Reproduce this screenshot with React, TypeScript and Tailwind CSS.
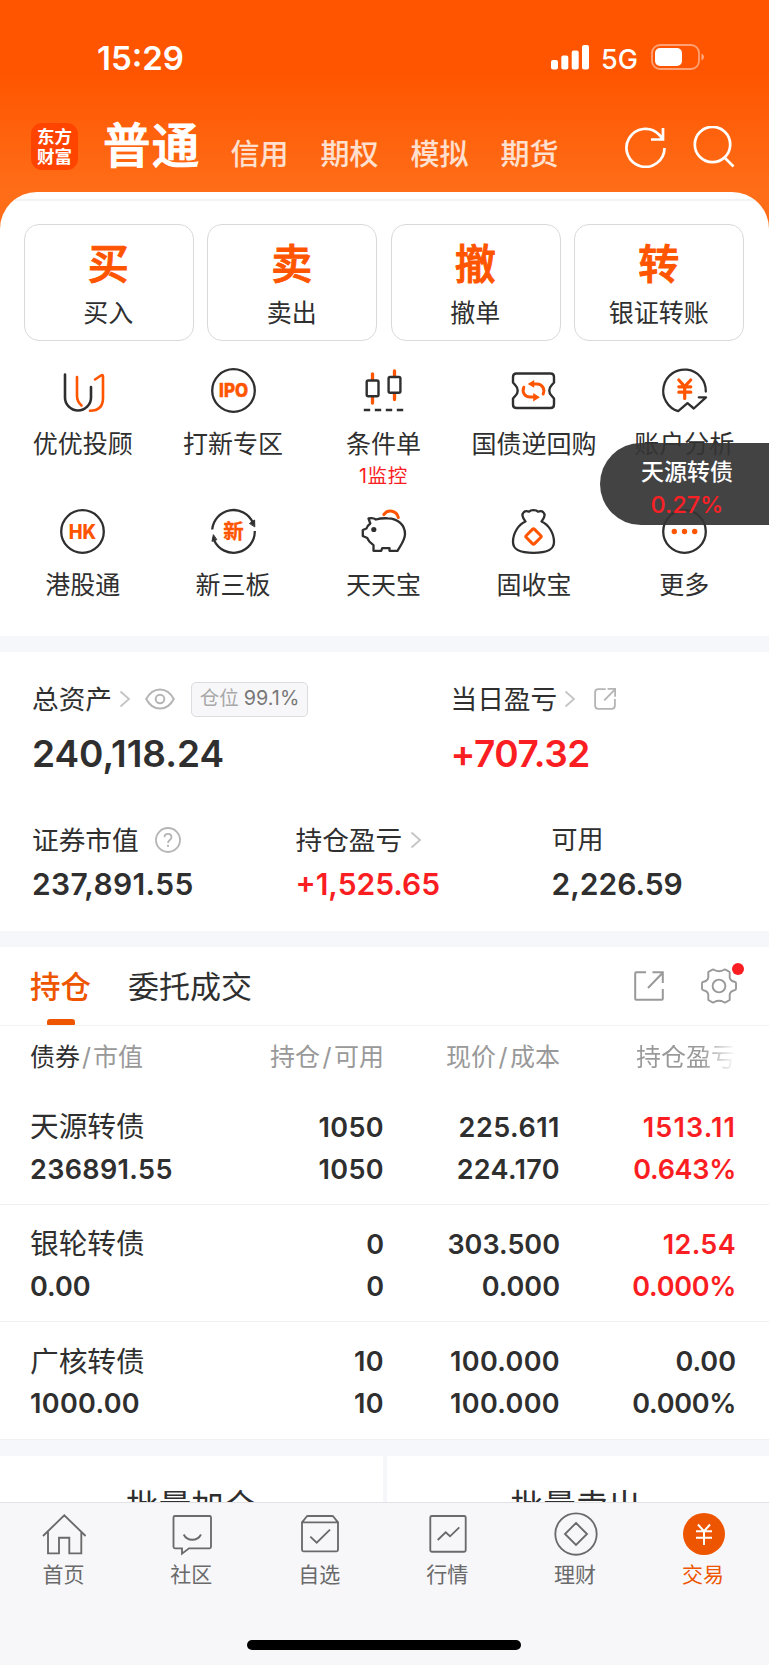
import React from "react";

const ORANGE = "#ff5500";
const DARK = "#2f2f2f";

function Glyph({ children }: { children: React.ReactNode }) {
  return (
    <svg viewBox="0 0 45 45" className="size-[45px] shrink-0 overflow-visible" fill="none" strokeLinecap="round" strokeLinejoin="round">
      {children}
    </svg>
  );
}

const Chevron = ({ className = "" }: { className?: string }) => (
  <svg viewBox="0 0 10 16" className={`h-4 w-2.5 shrink-0 overflow-visible ${className}`} fill="none" stroke="#c4c4c4" strokeWidth="1.8">
    <path d="M0.5 0.5 9 8 0.5 15.5" />
  </svg>
);

const actions = [
  { big: "买", label: "买入" },
  { big: "卖", label: "卖出" },
  { big: "撤", label: "撤单" },
  { big: "转", label: "银证转账" },
];

const shortcuts: { label: string; note?: string; icon: React.ReactNode }[] = [
  {
    label: "优优投顾",
    icon: (
      <g strokeWidth="2.6">
        <path stroke={ORANGE} d="M17 9v19c0 4 1.800 7 4.500 9.500M35 11.500l6-4q2-1.200 2 1.200V30c0 8-4 12.700-13 12.700" />
        <path stroke={DARK} d="M5 6.500v23a13 13 0 0 0 26 0V19" />
      </g>
    ),
  },
  {
    label: "打新专区",
    icon: (
      <>
        <circle cx="22.5" cy="22.5" r="21.3" stroke={DARK} strokeWidth="2.3" />
        <text x="22.6" y="29.3" textAnchor="middle" fontSize="18.500" fontWeight="800" fill={ORANGE} stroke={ORANGE} strokeWidth="0.5" textLength="29" lengthAdjust="spacingAndGlyphs">IPO</text>
      </>
    ),
  },
  {
    label: "条件单",
    note: "1监控",
    icon: (
      <>
        <path stroke={ORANGE} strokeWidth="3.3" d="M11.500 6v5.500M11.500 29.500v5.500M33.500 3v5.500M33.500 26v5.500" />
        <g stroke={DARK} strokeWidth="2.4">
          <rect x="5.700" y="12.500" width="11.800" height="15.800" rx="1.500" />
          <rect x="27.600" y="9" width="11.800" height="15.800" rx="1.500" />
          <path strokeLinecap="butt" d="M2.800 42h6.400M13.800 42h6.400M24.800 42h6.400M35.800 42h6.400" />
        </g>
      </>
    ),
  },
  {
    label: "国债逆回购",
    icon: (
      <>
        <path stroke={DARK} strokeWidth="2.4" d="M5.500 5.500h34q3.500 0 3.500 3.500v5.500l-2.600 3a7 7 0 0 0 0 10l2.600 3V36.500q0 3.500-3.500 3.500h-34q-3.500 0-3.500-3.500v-6l2.600-3a7 7 0 0 0 0-10l-2.600-3V9q0-3.500 3.500-3.500z" />
        <path stroke={ORANGE} strokeWidth="3" d="M12.800 19.200c-2 5 1 9.800 6.200 9.800h4M32.200 26c2-5-1-10-6.200-10h-4" />
        <path fill={ORANGE} d="M22.200 25l6.700 4.200-6.700 4.300zM23.200 12l-6.500 3.900 6.500 3.900z" />
      </>
    ),
  },
  {
    label: "账户分析",
    icon: (
      <>
        <path stroke={DARK} strokeWidth="2.300" d="M43.800 23.500A21.300 21.300 0 1 0 16.200 43.200L25.500 35.200 31.800 40.500 44 29.300H36.800" />
        <path stroke={ORANGE} strokeWidth="3.200" d="M16.800 12l5.900 6.500L28.700 12M22.700 18.500v12M16.800 18.800h12M16.800 24.200h12" />
      </>
    ),
  },
  {
    label: "港股通",
    icon: (
      <>
        <circle cx="22.500" cy="22.500" r="21.300" stroke={DARK} strokeWidth="2.300" />
        <text x="22.500" y="29.600" textAnchor="middle" fontSize="19.500" fontWeight="800" fill={ORANGE} textLength="27.500" lengthAdjust="spacingAndGlyphs">HK</text>
      </>
    ),
  },
  {
    label: "新三板",
    icon: (
      <>
        <path stroke={DARK} strokeWidth="2.300" strokeLinecap="butt" d="M1.200 20.500A21.300 21.300 0 0 1 41.800 13.500M43.800 22A21.300 21.300 0 0 1 3.200 31.500" />
        <path fill={DARK} stroke={DARK} strokeWidth="1" d="M38.800 14.300l4.800-3.300.2 6.500zM2.300 26l-1.300 6.300 4.500-1.500z" />
        <text x="22.500" y="29.800" textAnchor="middle" fontSize="20.500" fontWeight="700" fill={ORANGE} stroke={ORANGE} strokeWidth="0.300">新</text>
      </>
    ),
  },
  {
    label: "天天宝",
    icon: (
      <>
        <path stroke={ORANGE} strokeWidth="3" d="M22.800 5.600A8 8 0 0 1 37.300 8.500" />
        <path stroke={DARK} strokeWidth="2.300" d="M7.500 9.500c3-.6 5.500-.4 7.500 1 4-1.300 8-1.400 12-1.200C37 9.500 44 16 44 25c0 6-3.500 10-7.500 16.800h-8V39.100h-7.300l-1 2.700h-7.700v-5.700C9.500 34 7.500 32.500 6.300 29L1.800 27V21L5.500 19.500c.6-2 1.800-3.500 3.800-5z" />
        <circle cx="12.800" cy="20.500" r="2.600" fill={DARK} />
      </>
    ),
  },
  {
    label: "固收宝",
    icon: (
      <>
        <path stroke={DARK} strokeWidth="2.300" d="M14.500 12.500C11.500 9 10.500 5 12.600 3.300c1.600-1.500 3.700-1.200 5.400-.6 1.600-2 7.400-2 9 0 1.700-.6 3.800-.9 5.400.6C34.500 5 33.500 9 30.500 12.500 37.500 15.500 43 24 43 33c0 8.500-8 10.800-20.500 10.800S2 41.500 2 33c0-9 5.500-17.500 12.500-20.500z" />
        <rect x="16.700" y="21.700" width="11.600" height="11.600" rx="1.500" transform="rotate(45 22.500 27.500)" stroke={ORANGE} strokeWidth="3" />
      </>
    ),
  },
  {
    label: "更多",
    icon: (
      <>
        <circle cx="22.500" cy="22.500" r="21.300" stroke={DARK} strokeWidth="2.300" />
        <g fill={ORANGE}>
          <circle cx="12.300" cy="22.500" r="2.700" />
          <circle cx="22.500" cy="22.500" r="2.700" />
          <circle cx="32.700" cy="22.500" r="2.700" />
        </g>
      </>
    ),
  },
];

const holdings = [
  { name: "天源转债", value: "236891.55", held: "1050", free: "1050", price: "225.611", cost: "224.170", gain: "1513.11", rate: "0.643%", up: true },
  { name: "银轮转债", value: "0.00", held: "0", free: "0", price: "303.500", cost: "0.000", gain: "12.54", rate: "0.000%", up: true },
  { name: "广核转债", value: "1000.00", held: "10", free: "10", price: "100.000", cost: "100.000", gain: "0.00", rate: "0.000%", up: false },
];

const tabs: { label: string; icon: React.ReactNode; active?: boolean }[] = [
  { label: "首页", icon: <path d="M1 24 22.300 3.300 43.600 24M6 20v21.300h11V25.700h10.300v15.600h12V20" /> },
  { label: "社区", icon: <path d="M5 4h34.500q1.500 0 1.500 1.500V34.800q0 1.500-1.500 1.500H19l-7 5.400v-5.400H5q-1.500 0-1.500-1.500V5.500Q3.500 4 5 4zM13.700 22.500c3.500 7 13.700 7 17.300 0" /> },
  { label: "自选", icon: <path d="M4 10.300h36v27.500q0 1.500-1.500 1.500h-33Q4 39.300 4 37.800zL8.500 4.800Q9 4 10 4h24q1 0 1.500.8L40 10.300M12.300 24.700l6.400 6L32 17.700" /> },
  { label: "行情", icon: <path d="M5.800 4h32.400q1.500 0 1.500 1.500v32.700q0 1.500-1.500 1.500H5.800q-1.500 0-1.500-1.500V5.500Q4.300 4 5.800 4zM11.700 28l8-7.700 4.300 4 9.300-9" /> },
  {
    label: "理财",
    icon: (
      <>
        <circle cx="22" cy="22" r="20.700" />
        <path d="M22 11 33 22 22 33 11 22z" />
      </>
    ),
  },
  {
    label: "交易",
    active: true,
    icon: (
      <>
        <circle cx="22" cy="22" r="21" fill="#ee5500" stroke="none" />
        <path stroke="#fff" strokeWidth="2" d="M16 12.500l6 6.700 6-6.700M22 19.200V33M14 19.200h16M14 25.700h16" />
      </>
    ),
  },
];

function StatusBar() {
  return (
    <div className="flex h-[114px] items-center pr-[65px] pl-[97px] text-white">
      <span className="mt-[2px] text-[33px] font-semibold">15:29</span>
      <svg viewBox="0 0 38 25" className="ml-auto h-[25px] w-[38px]" fill="#fff">
        <rect x="0" y="15" width="7" height="9.500" rx="2" />
        <rect x="10.300" y="10.500" width="7" height="14" rx="2" />
        <rect x="20.700" y="5.500" width="7" height="19" rx="2" />
        <rect x="31" y="0" width="7" height="24.500" rx="2" />
      </svg>
      <span className="mt-[4px] ml-[12px] w-[37px] text-[27px] font-medium">5G</span>
      <svg viewBox="0 0 53 26" className="ml-[13px] h-[26px] w-[53px]">
        <rect x="1" y="1" width="47" height="24" rx="8" fill="none" stroke="#fff" strokeOpacity="0.45" strokeWidth="1.800" />
        <rect x="4" y="4" width="27" height="18" rx="5" fill="#fff" />
        <path d="M50.500 9.500q2.500 1 2.500 3.500t-2.500 3.500z" fill="#fff" fillOpacity="0.5" />
      </svg>
    </div>
  );
}

function AccountBar() {
  return (
    <div className="flex h-[78px] items-start pr-[34px] pl-[31px] text-white">
      <div className="mt-[9px] flex size-[47px] flex-col items-center justify-center gap-[2px] rounded-[11px] bg-[#ff4400] text-[17.500px] font-bold">
        <span>东方</span>
        <span>财富</span>
      </div>
      <span className="mt-[8px] ml-[25px] text-[47.500px] font-medium tracking-[1.200px] [-webkit-text-stroke:1px_currentColor]">普通</span>
      <div className="mt-[26px] ml-[30px] flex gap-[32px] text-[29px] font-medium text-white/80">
        <span>信用</span>
        <span>期权</span>
        <span>模拟</span>
        <span>期货</span>
      </div>
      <svg viewBox="0 0 42 42" className="mt-[12px] ml-auto size-[42px]" fill="none" stroke="#fff" strokeWidth="2.700">
        <path d="M39.500 22A19 19 0 1 1 34 8.500L38 13M38 2v11.500H26" />
      </svg>
      <svg viewBox="0 0 42 42" className="mt-[12px] ml-[26px] size-[42px]" fill="none" stroke="#fff" strokeWidth="2.700">
        <circle cx="19.500" cy="18.500" r="17.700" />
        <path d="M31.500 31.500 40.500 40.500" />
      </svg>
    </div>
  );
}

function ShareIcon({ className, color, round }: { className: string; color: string; round?: boolean }) {
  return (
    <svg viewBox="0 0 30 30" className={`${className} shrink-0`} fill="none" stroke={color} strokeWidth={round ? 2.500 : 2}>
      <path d={round ? "M16 1.500H6Q1.500 1.500 1.500 6v18q0 4.500 4.500 4.500h18q4.500 0 4.500-4.500v-9" : "M12 1.200H2.200q-1 0-1 1v25.600q0 1 1 1h25.600q1 0 1-1V18"} />
      <path d="M14 17 28 2.500M18.500 1.300h10.300V12" />
    </svg>
  );
}

function Assets() {
  return (
    <section className="h-[279px] pl-[32px] text-[#2f2f2f]">
      <div className="flex pt-[29px]">
        <div className="w-[418.500px]">
          <div className="flex h-[36px] items-center text-[26.700px]">
            <span>总资产</span>
            <Chevron className="ml-[8px]" />
            <svg viewBox="0 0 30 22" className="ml-[15px] h-[22px] w-[30px]" fill="none" stroke="#b5b5b5" strokeWidth="2">
              <path d="M1.200 11C8-1.800 22-1.800 28.800 11 22 23.800 8 23.800 1.200 11z" />
              <circle cx="15" cy="11" r="4.300" />
            </svg>
            <span className="ml-[16px] flex h-[35px] w-[117px] items-center justify-center gap-[5px] rounded-[5px] border border-[#dcdce0] bg-[#f7f7fa] text-[19.500px] text-[#a8a8a8]">
              仓位<span className="text-[19.800px] text-[#777]">99.1%</span>
            </span>
          </div>
          <p className="mt-[18px] text-[37px] font-semibold">240,118.24</p>
        </div>
        <div>
          <div className="flex h-[36px] items-center text-[26.700px]">
            <span>当日盈亏</span>
            <Chevron className="ml-[8px]" />
            <ShareIcon className="ml-[19px] size-[22px]" color="#b5b5b5" round />
          </div>
          <p className="mt-[18px] text-[37px] font-semibold tracking-[-0.450px] text-[#fa1e23]">+707.32</p>
        </div>
      </div>
      <div className="flex pt-[53px]">
        <div className="w-[263.500px]">
          <div className="flex h-[30px] items-center text-[26.700px]">
            <span>证券市值</span>
            <svg viewBox="0 0 26 26" className="ml-[16px] size-[26px]" fill="none" stroke="#b5b5b5" strokeWidth="1.800">
              <circle cx="13" cy="13" r="12" />
              <path d="M9.500 10.300c0-4.700 7-4.700 7 0 0 2.700-3.500 2.800-3.500 5.600M13 17.800v2.200" />
            </svg>
          </div>
          <p className="mt-[14px] text-[30px] font-semibold tracking-[0.350px]">237,891.55</p>
        </div>
        <div className="w-[256px]">
          <div className="flex h-[30px] items-center text-[26.700px]">
            <span>持仓盈亏</span>
            <Chevron className="ml-[9px]" />
          </div>
          <p className="mt-[14px] text-[30px] font-semibold text-[#fa1e23]">+1,525.65</p>
        </div>
        <div>
          <div className="flex h-[30px] items-center text-[26px]">可用</div>
          <p className="mt-[14px] text-[30px] font-semibold">2,226.59</p>
        </div>
      </div>
    </section>
  );
}

function tracking(text: string) {
  const ones = text.split("1").length - 1;
  if (text.endsWith("%")) return "tracking-[-0.300px]";
  if (ones >= 4) return "tracking-[1.100px]";
  if (ones === 2) return "tracking-[0.500px]";
  if (ones === 1) return "tracking-[0.350px]";
  return "";
}

function Figure({ text }: { text: string }) {
  return <span className={`flex h-[42px] items-center text-[27px] font-semibold ${tracking(text)}`}>{text}</span>;
}

function Pair({ top, bottom, className = "" }: { top: string; bottom: string; className?: string }) {
  return (
    <div className={`flex flex-col items-end ${className}`}>
      <Figure text={top} />
      <Figure text={bottom} />
    </div>
  );
}

function Holdings() {
  return (
    <section className="text-[#2f2f2f]">
      <div className="flex h-[79px] items-center border-b-[1.500px] border-[#f3f3f5] pr-[32px] pl-[30px] text-[31px]">
        <div className="flex h-full flex-col items-center text-[#ee5500]">
          <span className="mt-[25px] text-[30.500px] font-medium">持仓</span>
          <span className="mt-auto h-[6px] w-[28px] rounded-t-[3px] rounded-b-[1px] bg-[#ee5500]" />
        </div>
        <span className="ml-[37px]">委托成交</span>
        <ShareIcon className="ml-auto size-[30px]" color="#999" />
        <div className="relative ml-[37px] size-[36px]">
          <svg viewBox="0 0 36 36" className="size-[36px]" fill="none" stroke="#999" strokeWidth="1.900" strokeLinejoin="round">
            <path d="M7.300 4l4.200-2.300q1-.4 1.800.3 4.700 2.500 9.400 0 .8-.7 1.800-.3L28.700 4v5.500q.6 3.500 4.800 4.300 1.500.3 1.500 1.500v5.400q0 1.200-1.500 1.500-4.200.8-4.800 4.300V32l-4.200 2.300q-1 .4-1.800-.3-4.700-2.500-9.400 0-.8.7-1.800.3L7.300 32v-5.500q-.6-3.500-4.800-4.300Q1 21.900 1 20.700v-5.400q0-1.200 1.500-1.500 4.200-.8 4.800-4.300z" />
            <circle cx="18" cy="18" r="6.400" />
          </svg>
          <span className="absolute -top-[5px] -right-[7px] size-[12px] rounded-full bg-[#fa1e23]" />
        </div>
      </div>
      <div className="grid h-[62px] grid-cols-[200px_154px_176px_176px] items-center pl-[30px] text-[25px] text-[#999]">
        <span><span className="text-[#2f2f2f]">债券</span><span className="mx-[2px]">/</span>市值</span>
        <span className="text-right">持仓<span className="mx-[2.500px]">/</span>可用</span>
        <span className="text-right">现价<span className="mx-[2.500px]">/</span>成本</span>
        <span className="bg-linear-to-r from-[#999] from-80% to-[#ffffff] bg-clip-text pl-[76px] whitespace-nowrap text-transparent">持仓盈亏</span>
      </div>
      {holdings.map((h) => (
        <div key={h.name} className="grid h-[117.200px] grid-cols-[200px_154px_176px_176px] items-start border-b border-[#f0f0f2] pt-[18.500px] pl-[30px]">
          <div className="flex flex-col">
            <span className="flex h-[42px] items-center text-[28.700px]">{h.name}</span>
            <Figure text={h.value} />
          </div>
          <Pair top={h.held} bottom={h.free} />
          <Pair top={h.price} bottom={h.cost} />
          <Pair top={h.gain} bottom={h.rate} className={h.up ? "text-[#fa1e23]" : ""} />
        </div>
      ))}
    </section>
  );
}

export default function App() {
  return (
    <div className="relative flex h-[1665px] w-full flex-col overflow-hidden bg-white font-['Inter','Noto_Sans_CJK_SC',sans-serif] leading-none">
      <main className="min-h-0 flex-1 overflow-hidden">
        <div className="h-[636px] bg-[linear-gradient(180deg,#ff5500_0px,#ff5500_72px,#ff6d18_190px,#ff6d18_100%)]">
          <StatusBar />
          <AccountBar />
          <div className="flex h-[444px] flex-col overflow-hidden rounded-t-[37px] bg-white text-[#2f2f2f]">
            <div className="mt-[7px] h-[2px] shrink-0 bg-[#f3f3f3]" />
            <div className="mt-[23px] flex h-[117px] shrink-0 gap-[13.700px] pr-[25px] pl-[24px]">
              {actions.map((a) => (
                <div key={a.big} className="flex flex-1 flex-col items-center rounded-[15px] border border-[#d9d9d9] pt-[19px] pr-[1px]">
                  <span className="text-[41px] font-medium text-[#ff5500] [-webkit-text-stroke:1px_currentColor]">{a.big}</span>
                  <span className="mt-[16px] text-[25px]">{a.label}</span>
                </div>
              ))}
            </div>
            <div className="grid shrink-0 auto-rows-[140.700px] grid-cols-5 pr-[9.500px] pl-[7.500px]">
              {shortcuts.map((s) => (
                <div key={s.label} className="flex flex-col items-center pt-[27px]">
                  <Glyph>{s.icon}</Glyph>
                  <span className="mt-[19px] text-[25px] whitespace-nowrap">{s.label}</span>
                  {s.note && <span className="mt-[10px] text-[19.500px] tracking-[0.700px] text-[#fa1e23]">{s.note}</span>}
                </div>
              ))}
            </div>
          </div>
        </div>
        <div className="h-[16px] bg-[#f5f7fa]" />
        <Assets />
        <div className="h-[16px] bg-[#f5f7fa]" />
        <Holdings />
        <div className="h-[16px] bg-[#f5f7fa]" />
        <div className="grid h-[100px] grid-cols-2 gap-[4px] bg-[#f5f7fa] text-[32.600px] text-[#2f2f2f]">
          <div className="bg-white pt-[34px] text-center">批量加仓</div>
          <div className="bg-white pt-[34px] pr-[4px] text-center">批量卖出</div>
        </div>
      </main>
      <nav className="flex h-[163px] shrink-0 flex-col items-center border-t-[1.500px] border-[#e1e1e6] bg-[#f7f7fa]">
        <div className="grid w-full grid-cols-6 pr-[1.500px]">
          {tabs.map((t) => (
            <div key={t.label} className={`flex flex-col items-center pt-[9px] text-[21px] ${t.active ? "text-[#ee5500]" : "text-[#6a6a6a]"}`}>
              <svg viewBox="0 0 44 44" className="size-[44px]" fill="none" stroke="#6a6a6a" strokeWidth="1.850">
                {t.icon}
              </svg>
              <span className="mt-[8px] mr-[1px]">{t.label}</span>
            </div>
          ))}
        </div>
        <div className="mt-auto mr-[1px] mb-[15.500px] h-[10px] w-[274px] rounded-full bg-black" />
      </nav>
      <div className="absolute top-[443px] right-0 flex h-[82px] w-[169px] flex-col items-center rounded-l-[41px] bg-[#353535]/93 pt-[17.500px] pl-[5px]">
        <span className="text-[23px] font-medium text-white">天源转债</span>
        <span className="mt-[9.500px] text-[23.500px] font-medium text-[#fa2126]">0.27%</span>
      </div>
    </div>
  );
}
